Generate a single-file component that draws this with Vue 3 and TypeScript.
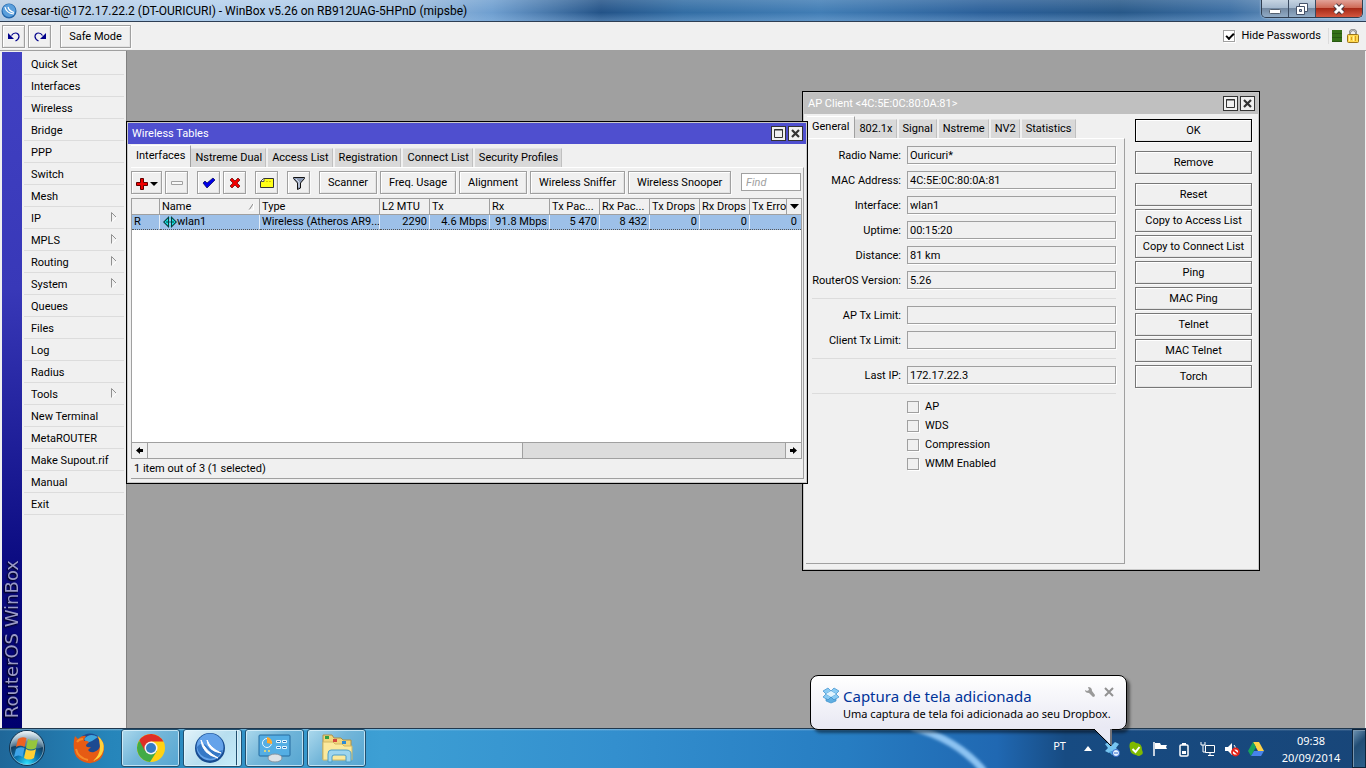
<script setup lang="ts">
import { ref } from 'vue'

interface MenuItem { label: string; sub?: boolean }
interface Field { id: string; label: string; value: string; rule?: boolean }

const menu: MenuItem[] = [
  { label: 'Quick Set' }, { label: 'Interfaces' }, { label: 'Wireless' }, { label: 'Bridge' },
  { label: 'PPP' }, { label: 'Switch' }, { label: 'Mesh' }, { label: 'IP', sub: true },
  { label: 'MPLS', sub: true }, { label: 'Routing', sub: true }, { label: 'System', sub: true },
  { label: 'Queues' }, { label: 'Files' }, { label: 'Log' }, { label: 'Radius' },
  { label: 'Tools', sub: true }, { label: 'New Terminal' }, { label: 'MetaROUTER' },
  { label: 'Make Supout.rif' }, { label: 'Manual' }, { label: 'Exit' },
]

const tableTabs = ['Interfaces', 'Nstreme Dual', 'Access List', 'Registration', 'Connect List', 'Security Profiles']
const clientTabs = ['General', '802.1x', 'Signal', 'Nstreme', 'NV2', 'Statistics']
const tools = ['Scanner', 'Freq. Usage', 'Alignment', 'Wireless Sniffer', 'Wireless Snooper']
const columns = ['', 'Name', 'Type', 'L2 MTU', 'Tx', 'Rx', 'Tx Pac...', 'Rx Pac...', 'Tx Drops', 'Rx Drops', 'Tx Erro']
const numbers = ['2290', '4.6 Mbps', '91.8 Mbps', '5 470', '8 432', '0', '0', '0']

const fields: Field[] = [
  { id: 'radio', label: 'Radio Name:', value: 'Ouricuri*' },
  { id: 'mac', label: 'MAC Address:', value: '4C:5E:0C:80:0A:81' },
  { id: 'iface', label: 'Interface:', value: 'wlan1' },
  { id: 'uptime', label: 'Uptime:', value: '00:15:20' },
  { id: 'distance', label: 'Distance:', value: '81 km' },
  { id: 'version', label: 'RouterOS Version:', value: '5.26', rule: true },
  { id: 'aptx', label: 'AP Tx Limit:', value: '' },
  { id: 'clienttx', label: 'Client Tx Limit:', value: '', rule: true },
  { id: 'lastip', label: 'Last IP:', value: '172.17.22.3', rule: true },
]
const flags = ['AP', 'WDS', 'Compression', 'WMM Enabled']
const actions = ['OK', 'Remove', 'Reset', 'Copy to Access List', 'Copy to Connect List', 'Ping', 'MAC Ping', 'Telnet', 'MAC Telnet', 'Torch']

const hidePasswords = ref(true)
const find = ref('')
</script>

<template>
  <div class="screen">
    <header class="titlebar">
      <svg class="app-icon" viewBox="0 0 16 16" width="16" height="16" aria-hidden="true">
        <circle cx="8" cy="8" r="7.5" fill="#2467ab" /><circle cx="8" cy="7.5" r="6.5" fill="#5a9fdc" />
        <path d="M4 4Q5 10 13 11M7 4Q8 8 13 9.500" fill="none" stroke="#fff" stroke-width="1.200" />
      </svg>
      <h1>cesar-ti@172.17.22.2 (DT-OURICURI) - WinBox v5.26 on RB912UAG-5HPnD (mipsbe)</h1>
      <div class="caption">
        <button aria-label="Minimize"><svg viewBox="0 0 14 14" width="14" height="14"><rect x="1.500" y="7.500" width="11" height="4" rx="1" fill="#fff" stroke="#54606f" /></svg></button>
        <button aria-label="Restore"><svg viewBox="0 0 14 14" width="14" height="14"><path d="M4.500 1.500h8v8h-8z" fill="#fff" stroke="#46536a" /><path d="M1.500 4.500h8v8h-8z" fill="#fff" stroke="#46536a" /><path d="M4.500 7.500h2v2h-2z" fill="#a9b8ca" stroke="#46536a" /></svg></button>
        <button class="exit" aria-label="Close"><svg viewBox="0 0 14 14" width="14" height="14"><path d="M3 3l8 8M11 3l-8 8" stroke="#4a3940" stroke-width="5" /><path d="M3 3l8 8M11 3l-8 8" stroke="#fff" stroke-width="3" /></svg></button>
      </div>
    </header>

    <div class="toolbar">
      <button class="btn sq" aria-label="Undo"><svg viewBox="0 0 14 14" width="14" height="14"><path d="M1 3v6h6z" fill="#00008b" /><path d="M4.500 5.500Q6 3 8.500 3A3.500 3.500 0 0 1 12 6.500Q12 9 8.500 11" fill="none" stroke="#00008b" stroke-width="1.200" /></svg></button>
      <button class="btn sq" aria-label="Redo"><svg viewBox="0 0 14 14" width="14" height="14"><path d="M13 3v6H7z" fill="#00008b" /><path d="M9.500 5.500Q8 3 5.500 3A3.500 3.500 0 0 0 2 6.500Q2 9 5.500 11" fill="none" stroke="#00008b" stroke-width="1.200" /></svg></button>
      <button class="btn safe">Safe Mode</button>
      <label class="hide"><input v-model="hidePasswords" type="checkbox" class="check">Hide Passwords</label>
      <span class="meter"></span>
      <svg class="lock" viewBox="0 0 12 14" width="12" height="14"><path d="M3 6V3.500Q3 1 6 1t3 2.500V6" fill="none" stroke="#777" stroke-width="2" /><path d="M3 6V3.500Q3 1 6 1t3 2.500V6" fill="none" stroke="#ddd" stroke-width=".7" /><rect x=".5" y="5.500" width="11" height="8" rx="1" fill="#ffd84d" stroke="#98731b" /><path d="M2.500 7v5M6.500 7v5" stroke="#fff3a0" /><path d="M4.500 8v3M8.500 7v5" stroke="#d59a23" /></svg>
    </div>

    <main class="body">
      <div class="brand"><span>RouterOS WinBox</span></div>
      <nav class="menu">
        <a v-for="m in menu" :key="m.label" href="#">{{ m.label }}
          <svg v-if="m.sub" viewBox="0 0 6 10" width="6" height="10"><path d="M1 9.500L5.500 5.500" fill="none" stroke="#fff" /><path d="M.5 9.500V.5L5 5" fill="none" stroke="#909090" /></svg>
        </a>
      </nav>

      <div class="desktop">
        <section class="win client">
          <div class="wintitle"><h2>AP Client &lt;4C:5E:0C:80:0A:81&gt;</h2>
            <button class="wb" aria-label="Maximize"><svg viewBox="0 0 11 11" width="11" height="11"><path d="M1.500 1.500h8v8h-8z" fill="none" stroke="#333" /><path d="M1 2h9" stroke="#333" /></svg></button>
            <button class="wb" aria-label="Close"><svg viewBox="0 0 11 11" width="11" height="11"><path d="M2 2l7 7M9 2l-7 7" stroke="#333" stroke-width="2.200" /></svg></button>
          </div>
          <div class="client-body">
            <div class="client-main">
              <div class="tabs">
                <button v-for="(t, i) in clientTabs" :key="t" class="tab" :class="{ on: i === 0 }">{{ t }}</button>
              </div>
              <form class="panel">
                <template v-for="f in fields" :key="f.id">
                  <div class="field"><label :for="f.id">{{ f.label }}</label><input :id="f.id" type="text" :value="f.value" readonly></div>
                  <hr v-if="f.rule">
                </template>
                <div class="flags">
                  <label v-for="f in flags" :key="f"><input type="checkbox" class="check">{{ f }}</label>
                </div>
              </form>
            </div>
            <div class="actions">
              <button v-for="(a, i) in actions" :key="a" class="btn" :class="{ ok: i === 0, gap: i < 2 }">{{ a }}</button>
            </div>
          </div>
        </section>

        <section class="win tables">
          <div class="wintitle"><h2>Wireless Tables</h2>
            <button class="wb" aria-label="Maximize"><svg viewBox="0 0 11 11" width="11" height="11"><path d="M1.500 1.500h8v8h-8z" fill="none" stroke="#333" /><path d="M1 2h9" stroke="#333" /></svg></button>
            <button class="wb" aria-label="Close"><svg viewBox="0 0 11 11" width="11" height="11"><path d="M2 2l7 7M9 2l-7 7" stroke="#333" stroke-width="2.200" /></svg></button>
          </div>
          <div class="tabs">
            <button v-for="(t, i) in tableTabs" :key="t" class="tab" :class="{ on: i === 0 }">{{ t }}</button>
          </div>
          <div class="tables-panel">
            <div class="tools">
              <button class="btn add" aria-label="Add"><svg viewBox="0 0 23 13" width="23" height="13"><path d="M5.500 1.500h3v4h4v3h-4v4h-3v-4h-4v-3h4z" fill="#f00000" stroke="#600000" /><path d="M15 5h8l-4 4z" fill="#000" /></svg></button>
              <button class="btn sq gap" aria-label="Remove"><svg viewBox="0 0 14 14" width="14" height="14"><path d="M1.500 5.500h11v3h-11z" fill="#f8f8f8" stroke="#a0a0a0" /></svg></button>
              <button class="btn sq" aria-label="Enable"><svg viewBox="0 0 14 14" width="14" height="14"><path d="M1 7l2-2 2 2 6-5 2 2-8 8z" fill="#0000e8" stroke="#000050" stroke-width=".7" /></svg></button>
              <button class="btn sq gap" aria-label="Disable"><svg viewBox="0 0 14 14" width="14" height="14"><path d="M2 4l2-2 3 3 3-3 2 2-3 3 3 3-2 2-3-3-3 3-2-2 3-3z" fill="#f00000" stroke="#600000" stroke-width=".7" /></svg></button>
              <button class="btn sq gap" aria-label="Comment"><svg viewBox="0 0 14 14" width="14" height="14"><path d="M.5 5.500l3-3h10v9H.5z" fill="#ffff18" stroke="#333" /><path d="M1 5.500h3v-3" fill="#fff" stroke="#555" /><path d="M6 5.500h6" stroke="#d5c500" stroke-dasharray="2 1" /></svg></button>
              <button class="btn sq gap" aria-label="Filter"><svg viewBox="0 0 14 14" width="14" height="14"><path d="M1.500 1.500h11v1L8.500 7v5l-3 1.500V7l-4-4.500z" fill="#8d9bb5" stroke="#111" /><path d="M4 3l3 3v5" fill="none" stroke="#d9e1ef" /></svg></button>
              <button v-for="t in tools" :key="t" class="btn text">{{ t }}</button>
              <input v-model="find" class="find" type="text" placeholder="Find" aria-label="Find">
            </div>
            <div class="list">
              <table>
                <colgroup><col v-for="(c, i) in columns" :key="i" :class="'c' + i"></colgroup>
                <thead><tr>
                  <th v-for="(c, i) in columns" :key="i" scope="col"><div>{{ c }}
                    <svg v-if="i === 1" viewBox="0 0 7 8" width="7" height="8"><path d="M1 7l4-6" stroke="#888" /><path d="M5.500 1v6H1" stroke="#fff" fill="none" /></svg>
                    <button v-if="i === 10" class="cols" aria-label="Columns"><svg viewBox="0 0 9 5" width="9" height="5"><path d="M0 0h9L4.500 5z" /></svg></button>
                  </div></th>
                </tr></thead>
                <tbody><tr>
                  <td>R</td>
                  <td><div class="name"><svg viewBox="0 0 14 12" width="14" height="12"><path d="M0 6l6-6v12zM14 6L8 0v12z" fill="#063c3c" /><path d="M1.500 6L5 2.500v7zM12.500 6L9 2.500v7z" fill="#19e5e5" /><path d="M3 6h8" stroke="#063c3c" stroke-dasharray="2 1" /><path d="M7 1v2M7 5v2M7 9v2" stroke="#19e5e5" /></svg>wlan1</div></td>
                  <td>Wireless (Atheros AR9...</td>
                  <td v-for="(n, i) in numbers" :key="i" class="num">{{ n }}</td>
                </tr></tbody>
              </table>
            </div>
            <div class="scroll">
              <button aria-label="Scroll left"><svg viewBox="0 0 7 7" width="7" height="7"><path d="M0 3.500L4 0v2h3v3H4v2z" /></svg></button>
              <div class="track"><div class="thumb"></div></div>
              <button aria-label="Scroll right"><svg viewBox="0 0 7 7" width="7" height="7"><path d="M7 3.500L3 0v2H0v3h3v2z" /></svg></button>
            </div>
            <div class="status">1 item out of 3 (1 selected)</div>
          </div>
        </section>
      </div>
    </main>

    <footer class="taskbar">
      <svg class="streak" viewBox="0 0 120 40" width="120" height="40" aria-hidden="true"><defs><filter id="soft"><feGaussianBlur stdDeviation="1.500" /></filter></defs><path d="M10 -2Q55 10 82 42" fill="none" stroke="#8cc3f2" stroke-width="7" filter="url(#soft)" /></svg>
      <button class="orb" aria-label="Start">
        <svg viewBox="0 0 38 38" width="38" height="38">
          <defs>
            <radialGradient id="orb" cx=".5" cy=".95" r=".9"><stop offset="0" stop-color="#2fe3ff" /><stop offset=".35" stop-color="#0b78b4" /><stop offset=".7" stop-color="#123c5e" /><stop offset="1" stop-color="#9dbccd" /></radialGradient>
            <linearGradient id="gloss" x2="0" y2="1"><stop offset="0" stop-color="#fff" stop-opacity=".8" /><stop offset="1" stop-color="#b3d0df" stop-opacity=".25" /></linearGradient>
          </defs>
          <circle cx="19" cy="19" r="17.500" fill="url(#orb)" stroke="#13324d" /><circle cx="19" cy="19" r="16.500" fill="none" stroke="#a5c8da" stroke-opacity=".6" />
          <path d="M3 18A16 16 0 0 1 35 18Q27 21 19 18T3 18z" fill="url(#gloss)" />
          <path d="M10 10q4-3 8.500-1l-2 9q-4-3-8.500 0z" fill="#ee6222" /><path d="M20 10q5 3 10 0l-2 9q-5 3-10 0z" fill="#95c63d" />
          <path d="M8 20q4-3 8.500-1l-2 9q-4-3-8.500 0z" fill="#3fa4e8" /><path d="M18 20q5 3 10 0l-2 9q-5 3-10 0z" fill="#ffd034" />
        </svg>
      </button>
      <button class="ff" aria-label="Firefox">
        <svg viewBox="0 0 32 32" width="32" height="32">
          <circle cx="17" cy="14" r="12.500" fill="#1d4a91" /><path d="M11 7Q17 0 25 5Q20 9 14 11z" fill="#3da6dd" />
          <path d="M2 4l3 3q4-4 8-3-2 2-2 5 2-1 5 1l-3 3q0 3 5 2l-3 3q2 3 6 2 6-2 6-7 0-5-3-9 7 4 7 12 0 8-5 12-7 5-15 2Q1 26 1 17q-1-7 1-13z" fill="#e65b14" />
          <path d="M25 4q7 6 5.500 14-2 8-10.500 11 7-6 7-14 0-6-2-11z" fill="#ffd23b" /><path d="M4 10q2-3 6-3M3 17q2 9 12 11" fill="none" stroke="#f68b28" stroke-width="2" />
        </svg>
      </button>
      <button class="task" aria-label="Chrome">
        <svg viewBox="0 0 30 30" width="30" height="30"><circle cx="15" cy="15" r="14" fill="#ffd213" /><path d="M2.900 8A14 14 0 0 0 14 29l7-11-6-3z" fill="#42ab46" /><path d="M15 8.500h12.400A14 14 0 0 0 3.300 7.300L9 18z" fill="#df2f26" /><circle cx="15" cy="15" r="6.500" fill="#f5f5f5" /><circle cx="15" cy="15" r="5" fill="#347bc4" /></svg>
      </button>
      <button class="task active" aria-label="WinBox">
        <svg viewBox="0 0 32 32" width="32" height="32"><circle cx="16" cy="16" r="15" fill="#174c91" /><circle cx="16" cy="15" r="13.500" fill="#64a3ea" /><path d="M3 15a13.500 13.500 0 0 0 26 3Q20 22 14 15T3 15z" fill="#3578c6" /><path d="M7 8Q8 22 24 26Q11 19 7 8M13 8Q14 19 27 21Q16 16 13 8" fill="#fff" stroke="#fff" /></svg>
      </button>
      <button class="task" aria-label="Control Panel">
        <svg viewBox="0 0 34 30" width="34" height="30"><rect x="1" y="2" width="31" height="21" rx="1" fill="#54aee4" stroke="#246a9f" /><circle cx="9" cy="10" r="4.500" fill="#54aee4" stroke="#e8f8ff" /><path d="M9 10V4a6 6 0 0 1 5 7z" fill="#ffa82b" /><path d="M18.500 7.500h4v2h-4zM24.500 7.500h4v2h-4zM18.500 13.500h4v2h-4zM24.500 13.500h4v2h-4z" fill="#2870b5" stroke="#e7f8ff" /><circle cx="7" cy="18" r="1" fill="#ffe165" /><circle cx="11" cy="18" r="1" fill="#ffe165" /><ellipse cx="17" cy="25" rx="7" ry="4" fill="#dce2e7" stroke="#8795a1" /></svg>
      </button>
      <button class="task" aria-label="Explorer">
        <svg viewBox="0 0 34 32" width="34" height="32"><path d="M3 8V3h9l2 3h7l2 2h8v19H3z" fill="#f2d77c" stroke="#ac914b" /><path d="M5 4h4v3H5z" fill="#2f9f44" /><path d="M13 7h4v3h-4z" fill="#d5483d" /><path d="M22 9h4v3h-4z" fill="#2c8bd5" /><path d="M3 10h10l2 2h7l2 2h8v14H3z" fill="#fbe99d" stroke="#d2b965" /><path d="M8 30v-8q0-4 3-4h15q5 0 5 4v8h-5v-6q0-1-2-1H14q-2 0-2 2v5z" fill="#9dd5ef" stroke="#4c9dc8" /></svg>
      </button>
      <div class="tray">
        <span class="lang">PT</span>
        <svg class="up" viewBox="0 0 8 5" width="8" height="5"><path d="M0 5l4-5 4 5z" fill="#fff" /></svg>
        <svg viewBox="0 0 16 16" width="16" height="16"><path d="M1 3l4-2 3 3 3-3 4 2-3 4 3 3-4 2-3-2-3 2-4-2 3-3z" fill="#76c4f0" /><path d="M5 11l3 3 3-2-3-2z" fill="#4aa2df" /><circle cx="12" cy="12" r="3.500" fill="#e9f5ff" stroke="#2e65cc" /><path d="M10 12h4" stroke="#2e65cc" /></svg>
        <svg viewBox="0 0 16 16" width="16" height="16"><path d="M2 2q3-3 6 0 6 0 6 7 2 4-1 5-2 2-5 0-6-1-6-6-1-3 0-6z" fill="#7fba00" /><path d="M4.500 8l3 3 4-5" fill="none" stroke="#fff" stroke-width="2" /></svg>
        <svg viewBox="0 0 16 16" width="16" height="16"><path d="M2 1v14" stroke="#fff" stroke-width="1.500" /><path d="M3 2h5l1 2h6l-1 2 1 2H9L8 8H3z" fill="#fff" /></svg>
        <svg viewBox="0 0 16 16" width="16" height="16"><path d="M6 2h4v2H6z" fill="#fff" /><rect x="4" y="4" width="8" height="11" rx="1" fill="#164675" stroke="#fff" stroke-width="1.500" /><path d="M6 10h4v3H6z" fill="#fff" /></svg>
        <svg viewBox="0 0 16 16" width="16" height="16"><path d="M5.500 4.500h9v7h-9zM8 14.500h6M10 11v3" fill="#153f6b" stroke="#fff" /><path d="M1 1v3h4V1M3 4v7h3" fill="none" stroke="#fff" /></svg>
        <svg viewBox="0 0 16 16" width="16" height="16"><path d="M1 6h3l4-4v12l-4-4H1z" fill="#fff" /><path d="M10 4q2 2 1 4" stroke="#fff" fill="none" /><circle cx="11.500" cy="11" r="3.500" fill="#fff" stroke="#e32118" stroke-width="1.800" /><path d="M9 9l5 4" stroke="#e32118" stroke-width="1.800" /></svg>
        <svg viewBox="0 0 16 16" width="16" height="16"><path d="M5 1h6l5 9h-6z" fill="#ffd246" /><path d="M5 1l3 5-5 9-3-5z" fill="#19a35c" /><path d="M6 10h10l-3 5H3z" fill="#4783ea" /></svg>
        <time>09:38<br>20/09/2014</time>
        <button class="peek" aria-label="Show desktop"></button>
      </div>
    </footer>

    <aside class="balloon" role="status">
      <svg class="box" viewBox="0 0 18 17" width="18" height="17"><path d="M1 4l5-3 3 3-5 3zM9 4l3-3 5 3-3 3zM1 10l3-3 5 3-3 3zM9 10l5-3 3 3-5 3z" fill="#8acbf4" stroke="#3c8fcc" stroke-width=".7" /><path d="M4 7l5-3 5 3-5 3z" fill="#e1f4ff" /><path d="M4 12v2l5 2 5-2v-2l-2 1-3-3-3 3z" fill="#60afe2" stroke="#3c8fcc" stroke-width=".7" /></svg>
      <div class="note"><h3>Captura de tela adicionada</h3><p>Uma captura de tela foi adicionada ao seu Dropbox.</p></div>
      <div class="note-tools">
        <button aria-label="Options"><svg viewBox="0 0 12 12" width="12" height="12"><path d="M4 1q4 0 4 4l3 4q0 2-2 2L5 7Q1 7 1 4l2 1 2-1z" fill="#999" /></svg></button>
        <button aria-label="Dismiss"><svg viewBox="0 0 10 10" width="10" height="10"><path d="M1 1l8 8M9 1l-8 8" stroke="#929292" stroke-width="2" /></svg></button>
      </div>
      <svg class="tail" viewBox="0 0 20 19" width="20" height="19" aria-hidden="true"><path d="M0 0h19v18z" fill="#e9e9f4" /><path d="M1 1l17 17V1" fill="none" stroke="#000" /></svg>
    </aside>
  </div>
</template>

<style>
html, body, #app { height: 100%; margin: 0; }
</style>

<style scoped>
* { box-sizing: border-box; }
.screen { position: relative; display: flex; flex-direction: column; min-height: 100vh; overflow: hidden; color: #000; background: #f0f0f0; font: 11px/16px Roboto, "Liberation Sans", Arial, sans-serif; }
button, input { font: inherit; color: inherit; margin: 0; padding: 0; }
button { display: flex; align-items: center; justify-content: center; }
h1, h2, h3, p { margin: 0; font-weight: normal; }
svg { flex: none; display: block; }

.titlebar { display: flex; height: 22px; padding-left: 1px; align-items: center; border-bottom: 1px solid #2d3e54; background: linear-gradient(rgba(255,255,255,.15), transparent 60%, rgba(150,190,230,.35)), linear-gradient(90deg, #bccfe3, #b5d1ed 14%, #b0cce9 22%, #9dbcdc 30%, #6f9fd0 36%, #235388 44%, #326da4 50%, #417db5 60%, #2b609a 72%, #275889 82%, #3b6ea3 90%, #9ab8d4); }
.app-icon { margin-right: 4px; }
h1 { flex: 1; font: 12px/20px Roboto, "Open Sans", sans-serif; white-space: nowrap; }
.caption { display: flex; align-self: flex-start; height: 18px; margin-right: 3px; border: 1px solid #303e50; border-top: 0; border-radius: 0 0 5px 5px; overflow: hidden; box-shadow: 0 0 2px #dce9f4; }
.caption button { width: 27px; border: 0; border-right: 1px solid #3a4a60; background: linear-gradient(#c6d4e2, #a6bacf 45%, #7288a1 48%, #91abc5); }
.caption .exit { width: 46px; border-right: 0; background: linear-gradient(#e2a298, #cf6a57 45%, #a52816 48%, #d4573f); }

.toolbar { display: flex; align-items: center; height: 29px; padding: 0 7px 0 2px; gap: 3px; border-bottom: 1px solid #a0a0a0; }
.btn { flex: none; height: 23px; padding-top: 1px; border: 1px solid #a0a0a0; background: #f0f0f0; box-shadow: inset 1px 1px #fff, inset -1px -1px #e3e3e3, 1px 1px #fafafa; white-space: nowrap; }
.sq { width: 23px; }
.safe { width: 71px; margin-left: 6px; }
.hide { display: flex; align-items: center; gap: 6px; margin-left: auto; padding-right: 7px; border-right: 1px solid #dcdcdc; }
.check { appearance: none; width: 12px; height: 12px; border: 1px solid #a0a0a0; box-shadow: 1px 1px #fff; }
.hide .check { background: #fff; }
.check:checked::after { content: ""; display: block; width: 6px; height: 3px; margin: 2px; border: solid #000; border-width: 0 0 2px 2px; transform: rotate(-45deg); }
.meter { width: 10px; height: 12px; background: repeating-linear-gradient(#347017 0 3px, #285911 3px 4px); }
.lock { margin-left: 2px; }

.body { flex: 1; display: flex; min-height: 0; padding: 1px 1px 0 2px; }
.brand { display: flex; align-items: flex-end; justify-content: center; width: 20px; padding-bottom: 10px; background: linear-gradient(#4141c3, #3838b8 35%, #0c0c82 75%, #00006e); color: #9a9ac8; }
.brand span { writing-mode: vertical-rl; transform: rotate(180deg); font: 18px/20px "DejaVu Sans", sans-serif; text-shadow: -1px -1px 2px #000; white-space: nowrap; }
.menu { width: 104px; padding: 1px 2px 0; }
.menu a { display: flex; align-items: center; justify-content: space-between; height: 22px; padding: 2px 7px 0; border-bottom: 1px solid #dcdcdc; color: #000; text-decoration: none; white-space: nowrap; }
.menu svg { margin-bottom: 4px; }
.desktop { position: relative; flex: 1; margin-top: -1px; border-left: 1px solid #808080; background: #a0a0a0; }

.win { position: absolute; display: flex; flex-direction: column; border: 1px solid #000; background: #f0f0f0; box-shadow: inset 1px 1px #c8c8c8, inset -1px -1px #c8c8c8; padding: 1px; }
.tables { left: -1px; top: 70px; width: 682px; height: 363px; }
.client { left: 675px; top: 40px; width: 458px; height: 480px; }
.wintitle { display: flex; align-items: center; gap: 2px; height: 21px; padding: 0 3px 0 4px; color: #fff; background: #4f4fcf; }
.client .wintitle { background: #c0c0c0; }
h2 { flex: 1; padding-top: 1px; font-size: 11px; line-height: 16px; }
.wb { width: 15px; height: 15px; border: 1px solid #333; background: #f0f0f0; color: #333; }
.tabs { display: flex; align-items: flex-end; height: 23px; padding-left: 3px; gap: 2px; }
.client .tabs { height: 24px; padding-left: 1px; }
.tab { height: 19px; padding: 0 3px 0 4px; border: 0; border-top: 1px solid #e4e4e4; border-right: 1px solid #c0c0c0; background: #d9d9d9; white-space: nowrap; }
.tab.on { height: 22px; padding: 0 5px 1px; margin-right: -2px; border-top: 1px solid #fff; border-right: 1px solid #a0a0a0; background: #f0f0f0; position: relative; }
.tables-panel { flex: 1; display: flex; flex-direction: column; margin: 0 2px 3px 3px; border-right: 1px solid #a0a0a0; border-bottom: 1px solid #a0a0a0; border-top: 1px solid #fff; padding-right: 1px; }
.tools { display: flex; gap: 3px; padding: 3px 1px 4px 0; }
.add { width: 31px; }
.btn.gap { margin-right: 6px; }
.btn.text { padding: 1px 8px 0; }
.find { width: 60px; height: 18px; margin: 2px 0 0 auto; padding: 0 4px; border: 1px solid #a0a0a0; background: #fff; font-style: italic; }
.find::placeholder { color: #a0a0a0; opacity: 1; }
.list { flex: 1; border: 1px solid #a0a0a0; background: #fff; overflow: hidden; }
table { width: 100%; border-collapse: separate; border-spacing: 0; table-layout: fixed; }
.c0 { width: 28px; } .c1 { width: 100px; } .c2 { width: 120px; }
.c3, .c6, .c7, .c8, .c9 { width: 50px; } .c4, .c5 { width: 60px; }
th { height: 16px; padding: 0; border-right: 1px solid #a0a0a0; border-bottom: 1px solid #a0a0a0; background: #f0f0f0; font-weight: normal; text-align: left; }
th:last-child, td:last-child { border-right: 0; }
th div { display: flex; align-items: center; justify-content: space-between; height: 15px; padding-left: 2px; white-space: nowrap; overflow: hidden; }
th svg { margin-right: 4px; }
.cols { flex: none; width: 15px; height: 15px; border: 0; border-left: 1px solid #a0a0a0; background: #f0f0f0; }
.cols svg { margin: 0; }
td { height: 15px; padding: 0 2px; border-right: 1px solid #e4edf7; border-bottom: 1px dotted #555; background: #9dc0e8; line-height: 14px; white-space: nowrap; overflow: hidden; }
.num { text-align: right; }
td:last-child { padding-right: 4px; }
.name { display: flex; align-items: center; padding-left: 1px; }
.scroll { display: flex; height: 16px; border-left: 1px solid #a0a0a0; border-right: 1px solid #a0a0a0; border-bottom: 1px solid #a0a0a0; }
.scroll button { width: 15px; border: 0; background: #f0f0f0; }
.track { flex: 1; background: #dcdcdc; border: 1px solid #a0a0a0; border-width: 0 1px; }
.thumb { width: 375px; height: 15px; border-right: 1px solid #a0a0a0; background: #f0f0f0; }
.status { height: 19px; padding: 2px 3px 0; }

.client-body { flex: 1; display: flex; }
.client-main { flex: 1; display: flex; flex-direction: column; min-width: 0; margin: 0 0 5px 2px; }
.panel { flex: 1; padding: 7px 8px 0 6px; border-right: 1px solid #a0a0a0; border-bottom: 1px solid #a0a0a0; border-top: 1px solid #fff; }
.field { display: flex; align-items: center; gap: 6px; height: 18px; margin-bottom: 7px; }
.field label { flex: 1; padding-top: 1px; text-align: right; white-space: nowrap; }
.field input { flex: none; width: 209px; height: 18px; padding: 0 2px; border: 1px solid #a0a0a0; background: #f0f0f0; box-shadow: 1px 1px #fff; }
hr { height: 1px; margin: 9px 0 7px; border: 0; background: #dcdcdc; }
.flags { display: flex; flex-direction: column; gap: 7px; padding: 0 0 0 95px; }
.flags label { display: flex; align-items: center; gap: 6px; line-height: 12px; }
.actions { display: flex; flex-direction: column; flex: none; gap: 3px; width: 133px; padding: 5px 6px 0 10px; }
.actions .btn { border-color: #777; }
.actions .btn.ok { border-color: #000; }
.actions .btn.gap { margin: 0 0 6px; }

.taskbar { position: relative; display: flex; height: 40px; border-top: 1px solid #20384e; background: linear-gradient(rgba(255,255,255,.35) 0, transparent 2px), linear-gradient(90deg, #1f6799, #2685ba 8%, #3394c9 20%, #3d9fd4 28%, #338fce 45%, #277dc2 62%, #2068b2 73%, #174b82 78%, #184679); }
.streak { position: absolute; right: 344px; top: 0; }
.taskbar > button { height: 38px; }
.orb, .ff { border: 0; background: transparent; }
.orb { width: 38px; margin-left: 8px; }
.ff { width: 34px; margin: 0 15px 0 26px; }
.task { width: 59px; margin-right: 3px; border: 1px solid #22506f; border-radius: 3px; background: linear-gradient(135deg, #acd9ed, #73b6d9 45%, #56a6d2); box-shadow: inset 0 0 0 1px rgba(230,248,255,.7); }
.task.active { padding-right: 6px; background: linear-gradient(90deg, transparent 52px, #21506f 52px 53px, #d8effa 53px 54px, transparent 54px), linear-gradient(135deg, #e3f3fa, #b7deef 50%, #c7eefb); }
.tray { display: flex; align-items: center; margin-left: auto; color: #fff; gap: 8px; font: 11px/17px "Noto Sans", "Open Sans", sans-serif; }
.lang { margin: -6px 10px 0 0; }
.up { margin-right: 4px; }
time { width: 66px; margin-left: 6px; text-align: center; white-space: nowrap; }
.peek { width: 14px; height: 39px; border: 1px solid #0d243b; background: linear-gradient(135deg, #7095b3, #224d75 40%, #2b5f8a); box-shadow: inset 1px 1px #7895ad; }

.balloon { position: absolute; right: 239px; bottom: 38px; display: flex; width: 317px; height: 55px; padding: 11px 10px 0 11px; border: 1px solid #000; border-radius: 8px; background: linear-gradient(#fff, #e8e8f3); box-shadow: 3px 3px 3px rgba(0,0,0,.45); }
.note { margin-left: 3px; flex: 1; }
.note h3 { color: #003399; font: 15px/18px "Noto Sans", "Open Sans", sans-serif; white-space: nowrap; }
.note p { font: 11px/18px "Noto Sans", "Open Sans", sans-serif; white-space: nowrap; }
.note-tools { position: absolute; top: 10px; right: 12px; display: flex; gap: 8px; }
.note-tools button { border: 0; background: transparent; }
.tail { position: absolute; right: 13px; top: 52px; }
</style>
